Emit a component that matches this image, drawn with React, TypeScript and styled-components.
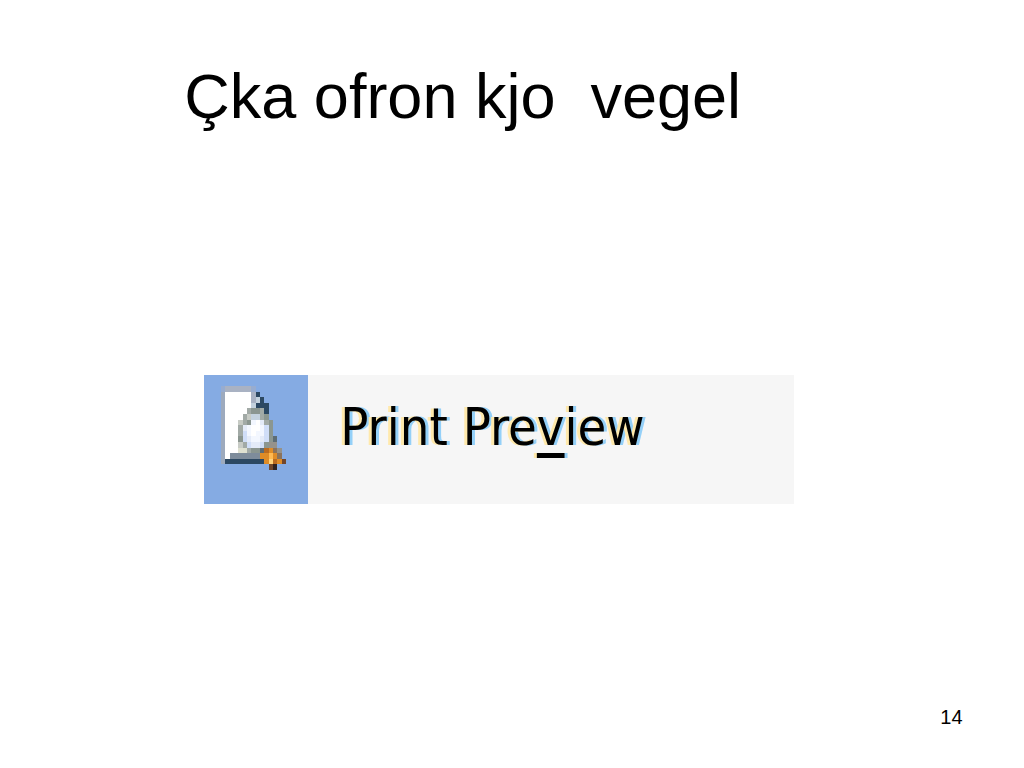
import React from 'react';
import styled, { createGlobalStyle } from 'styled-components';

const GlobalStyle = createGlobalStyle`
  body {
    margin: 0;
    background: #ffffff;
    color: #000000;
    font-family: "Liberation Sans", Arial, sans-serif;
  }
`;

const Slide = styled.main`
  box-sizing: border-box;
  min-height: 100vh;
  display: flex;
  flex-direction: column;
  padding: 60px 6% 39px 18%;
`;

const Title = styled.h1`
  margin: 0;
  font-size: 63px;
  line-height: 72px;
  font-weight: 400;
  white-space: pre;
`;

const Content = styled.section`
  flex: 1;
  padding: 243px 16% 0 20px;
`;

const MenuItem = styled.button`
  display: flex;
  width: 590px;
  max-width: 100%;
  height: 129px;
  padding: 0;
  border: 0;
  background: #f6f6f6;
  color: #000000;
  text-align: left;
`;

const IconCell = styled.span`
  flex: 0 0 104px;
  align-self: stretch;
  box-sizing: border-box;
  padding: 11px 0 0 17px;
  background: #85abe3;
`;

const MenuLabel = styled.span`
  padding: 16px 0 0 32px;
  font-family: "DejaVu Sans Condensed", "DejaVu Sans", sans-serif;
  font-size: 52px;
  line-height: 72px;
  white-space: nowrap;
  text-shadow: -3px 0 0 #ffe9ac, 3px 0 0 #94d0f8;
`;

const AccessKey = styled.span`
  text-decoration: underline;
  text-decoration-thickness: 5px;
  text-underline-offset: 8px;
  text-decoration-skip-ink: none;
`;

const PageNumber = styled.footer`
  align-self: flex-end;
  font-size: 20px;
  line-height: 24px;
`;

const palette: Record<string, string> = {
  a: '#97acd0', b: '#a9b2c3', c: '#9daabd', w: '#ffffff', d: '#2c4862',
  l: '#c4d2de', g: '#a2aaa6', h: '#8b9690', i: '#c7cbc5', p: '#e4ebf8',
  q: '#d0def8', r: '#f3f7ff', s: '#7e8c9b', t: '#5d6c74', y: '#dfe1d1',
  n: '#95928b', m: '#8b735c', o: '#df8c27', O: '#ffb951', u: '#ffd27b',
  k: '#bb6b20', x: '#71462b', z: '#302320',
};

const iconRows = [
  'abbbbbba.......',
  'cwwwwwwbd......',
  'cwwwwwwbld.....',
  'cwwwwwwlddd....',
  'cwwwwwghhgd....',
  'cwwwwgillgh....',
  'cwwwighrwpgh...',
  'cwwwgprwwrqh...',
  'cwwwgqrwrrqh...',
  'cwwwhqprrpqht..',
  'cwwwigqppqhnn..',
  'cwwwyyghhtkomn.',
  'cwsssssssooOom.',
  'cdddddddddoukox',
  '...........xz..',
];

function PreviewIcon() {
  return (
    <svg width="65" height="84" viewBox="0 0 15 15" preserveAspectRatio="none" shapeRendering="crispEdges" aria-hidden="true">
      {iconRows.flatMap((row, y) =>
        [...row].map((key, x) =>
          key === '.' ? null : <rect key={`${x}-${y}`} x={x} y={y} width="1" height="1" fill={palette[key]} />
        )
      )}
    </svg>
  );
}

export default function App() {
  return (
    <>
      <GlobalStyle />
      <Slide>
        <Title>{'Çka ofron kjo  vegel'}</Title>
        <Content>
          <MenuItem type="button">
            <IconCell><PreviewIcon /></IconCell>
            <MenuLabel>Print Pre<AccessKey>v</AccessKey>iew</MenuLabel>
          </MenuItem>
        </Content>
        <PageNumber>14</PageNumber>
      </Slide>
    </>
  );
}
